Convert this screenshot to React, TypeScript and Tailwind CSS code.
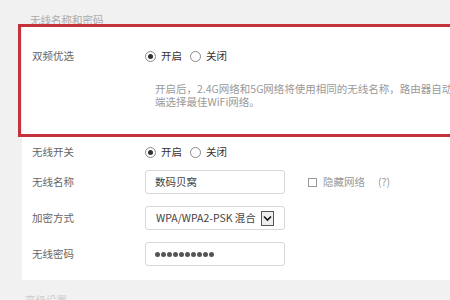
import React from "react";

const font = { fontFamily: '"Noto Sans CJK SC", "Noto Sans", sans-serif' };

function Radio({ checked }: { checked?: boolean }) {
  return (
    <span className="w-[11px] h-[11px] rounded-full border border-[#888] bg-white flex items-center justify-center shrink-0">
      {checked ? <span className="w-[5px] h-[5px] rounded-full bg-[#333]" /> : null}
    </span>
  );
}

function RadioPair() {
  return (
    <div className="flex items-center text-[10.5px] text-[#333]">
      <Radio checked />
      <span className="ml-[5px]">开启</span>
      <span className="ml-[8px]"><Radio /></span>
      <span className="ml-[5px]">关闭</span>
    </div>
  );
}

function Label({ children }: { children: React.ReactNode }) {
  return <div className="w-[123px] shrink-0 text-[10.5px] text-[#666] pl-[10px]">{children}</div>;
}

function Box({ children }: { children: React.ReactNode }) {
  return (
    <div className="w-[140px] h-[24px] border border-[#d8d8d8] rounded-[3px] bg-white flex items-center pl-[9px] text-[10.5px] text-[#444] whitespace-nowrap">
      {children}
    </div>
  );
}

export default function App() {
  return (
    <div className="w-[450px] h-[300px] overflow-hidden bg-[#f1f1f1] relative" style={font}>
      <div className="pt-[13px] pl-[30px] h-[26px] text-[10.5px] text-[#aaa] leading-[14px]">无线名称和密码</div>
      <div className="ml-[22px] w-[500px] bg-white pt-[18px] pb-[14px]">
        <div className="flex items-center h-[24px]">
          <Label>双频优选</Label>
          <RadioPair />
        </div>
        <div className="ml-[133px] mt-[14px] text-[10.5px] text-[#999] leading-[13px] whitespace-nowrap">
          <div>开启后，2.4G网络和5G网络将使用相同的无线名称，路由器自动为终</div>
          <div>端选择最佳WiFi网络。</div>
        </div>
        <div className="flex items-center h-[24px] mt-[32px]">
          <Label>无线开关</Label>
          <RadioPair />
        </div>
        <div className="flex items-center h-[24px] mt-[6px]">
          <Label>无线名称</Label>
          <Box>数码贝窝</Box>
          <div className="ml-[23px] flex items-center text-[10.5px] text-[#999]">
            <span className="w-[9px] h-[9px] border border-[#999] bg-white" />
            <span className="ml-[6px]">隐藏网络</span>
            <span className="ml-[13px]">(?)</span>
          </div>
        </div>
        <div className="flex items-center h-[24px] mt-[12px]">
          <Label>加密方式</Label>
          <Box>
            <span className="ml-[1px]">WPA/WPA2-PSK 混合</span>
            <span className="ml-[5px] w-[13px] h-[15px] border border-[#555] bg-[#eee] flex items-center justify-center">
              <svg width="9" height="7" viewBox="0 0 9 7">
                <path d="M1 1.5 L4.5 5 L8 1.5" stroke="#111" strokeWidth="1.6" fill="none" />
              </svg>
            </span>
          </Box>
        </div>
        <div className="flex items-center h-[24px] mt-[12px]">
          <Label>无线密码</Label>
          <Box>
            <span className="flex gap-[1px]">
              {Array.from({ length: 10 }).map((_, i) => (
                <span key={i} className="w-[5px] h-[5px] rounded-full bg-[#555]" />
              ))}
            </span>
          </Box>
        </div>
      </div>
      <div className="pt-[13px] pl-[25px] text-[10.5px] text-[#ccc] leading-[14px]">高级设置</div>
      <div className="absolute left-[18px] top-[24px] w-[460px] h-[113px] border-[3px] border-[#c5323b]" />
    </div>
  );
}
